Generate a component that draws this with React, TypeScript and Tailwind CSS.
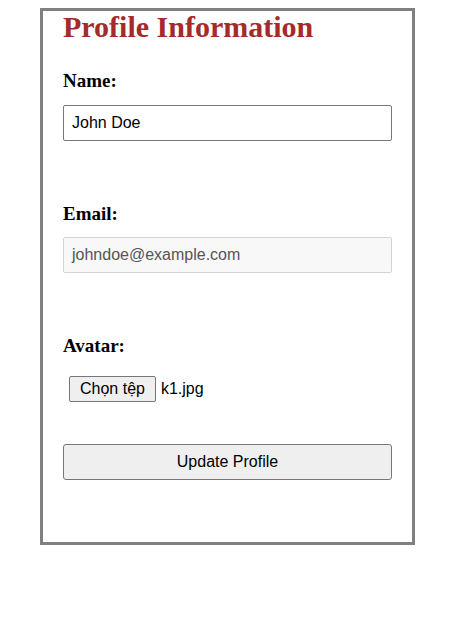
export default function App() {
  return (
    <div className="min-h-[621px] bg-white pt-[8px] pl-[40px]">
      <div className="box-border h-[537px] w-[375px] border-[3px] border-[#808080] px-[20px]">
        <h2 className="m-0 font-['Liberation_Serif',serif] text-[30px] leading-[32px] font-bold text-[#a52a2a]">
          Profile Information
        </h2>

        <div className="mt-[27px]">
          <label className="block font-['Liberation_Serif',serif] text-[19px] leading-[22px] font-bold text-black">
            Name:
          </label>
          <div className="mt-[13px] box-border flex h-[36px] w-full items-center rounded-[2px] border border-[#767676] px-[8px] font-['Liberation_Sans',Arial,sans-serif] text-[16px] text-black">
            John Doe
          </div>
        </div>

        <div className="mt-[62px]">
          <label className="block font-['Liberation_Serif',serif] text-[19px] leading-[22px] font-bold text-black">
            Email:
          </label>
          <div className="mt-[12px] box-border flex h-[36px] w-full items-center rounded-[2px] border border-[#d3d3d3] bg-[#f8f8f8] px-[8px] font-['Liberation_Sans',Arial,sans-serif] text-[16px] text-[#555]">
            johndoe@example.com
          </div>
        </div>

        <div className="mt-[62px]">
          <label className="block font-['Liberation_Serif',serif] text-[19px] leading-[22px] font-bold text-black">
            Avatar:
          </label>
          <div className="mt-[19px] flex items-center gap-[5px] pl-[6px] font-['Liberation_Sans',Arial,sans-serif] text-[16px] text-black">
            <button className="box-border h-[26px] rounded-[2px] border border-[#767676] bg-[#efefef] px-[10px] leading-[18px]">
              Chọn tệp
            </button>
            <span>k1.jpg</span>
          </div>
        </div>

        <button className="mt-[42px] box-border h-[36px] w-full rounded-[3px] border border-[#767676] bg-[#efefef] font-['Liberation_Sans',Arial,sans-serif] text-[16px] text-black">
          Update Profile
        </button>
      </div>
    </div>
  );
}
